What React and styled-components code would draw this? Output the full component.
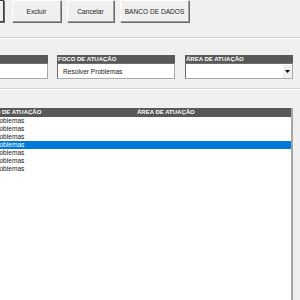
import React from "react";
import styled, { createGlobalStyle } from "styled-components";

const GlobalStyle = createGlobalStyle`
  html, body {
    margin: 0;
    padding: 0;
    background: #f0f0f0;
    font-family: "Liberation Sans", Arial, sans-serif;
  }
  #root {
    width: 300px;
    height: 300px;
    overflow: hidden;
  }
`;

const Window = styled.div`
  width: 300px;
  height: 300px;
  display: flex;
  flex-direction: column;
  overflow: hidden;
  background: #f0f0f0;
`;

const Toolbar = styled.div`
  display: flex;
  align-items: flex-start;
  gap: 6px;
  height: 37px;
  border-bottom: 1px solid #c9c9c9;
  box-shadow: 0 1px 0 #ffffff;
`;

const Button = styled.div`
  box-sizing: border-box;
  width: ${(p) => p.$w}px;
  height: 22px;
  margin-left: ${(p) => p.$ml || 0}px;
  display: flex;
  align-items: center;
  justify-content: center;
  background: #f0f0f0;
  border: 1px solid ${(p) => (p.$focus ? "#3c3c3c" : "#ffffff")};
  border-right-color: ${(p) => (p.$focus ? "#3c3c3c" : "#a0a0a0")};
  border-bottom-color: ${(p) => (p.$focus ? "#3c3c3c" : "#a0a0a0")};
  box-shadow: 1px 1px 0 #696969;
  font-size: 6.6px;
  color: #1a1a1a;
  white-space: nowrap;
`;

const FieldsRow = styled.div`
  display: flex;
  align-items: flex-start;
  padding-top: 17px;
  height: 33px;
  border-bottom: 1px solid #d6d6d6;
  box-shadow: 0 1px 0 #ffffff;
`;

const Field = styled.div`
  display: flex;
  flex-direction: column;
  width: ${(p) => p.$w}px;
  margin-left: ${(p) => p.$ml}px;
  flex-shrink: 0;
`;

const FieldLabel = styled.div`
  height: 8px;
  background: #585858;
  color: #ffffff;
  font-weight: bold;
  font-size: 6px;
  line-height: 8px;
  padding-left: 1px;
  white-space: nowrap;
  overflow: hidden;
`;

const FieldBox = styled.div`
  box-sizing: border-box;
  height: 16px;
  background: #ffffff;
  border: 1px solid #a9a9a9;
  border-top-color: #6d6d6d;
  border-left-color: #6d6d6d;
  display: flex;
  align-items: center;
  justify-content: space-between;
  padding-left: 5px;
  font-size: 6.6px;
  color: #1a1a1a;
`;

const DropButton = styled.div`
  width: 9px;
  height: 13px;
  background: #f0f0f0;
  display: flex;
  align-items: center;
  justify-content: center;
`;

const GridArea = styled.div`
  flex: 1;
  margin-top: 19px;
  width: 293px;
  display: flex;
  flex-direction: column;
  background: #ffffff;
  border-right: 2px solid #a6a6a6;
  box-sizing: border-box;
  overflow: hidden;
`;

const GridRow = styled.div`
  display: flex;
  height: ${(p) => (p.$head ? 9 : 8)}px;
  line-height: ${(p) => (p.$head ? 9 : 8)}px;
  background: ${(p) => (p.$head ? "#585858" : p.$sel ? "#0078d7" : "#ffffff")};
  color: ${(p) => (p.$head || p.$sel ? "#ffffff" : "#1a1a1a")};
  font-weight: ${(p) => (p.$head ? "bold" : "normal")};
  font-size: ${(p) => (p.$head ? 6 : 6.6)}px;
  white-space: nowrap;
`;

const Cell = styled.div`
  width: ${(p) => p.$w}px;
  flex-shrink: 0;
  overflow: hidden;
  text-indent: ${(p) => p.$indent || 0}px;
`;

const rows = [false, false, false, true, false, false, false];

export default function App() {
  return (
    <Window>
      <GlobalStyle />
      <Toolbar>
        <Button $w={48} $ml={-44} $focus />
        <Button $w={49} style={{ marginLeft: 2 }}>Excluir</Button>
        <Button $w={47}>Cancelar</Button>
        <Button $w={69}>BANCO DE DADOS</Button>
      </Toolbar>
      <FieldsRow>
        <Field $w={100} $ml={-52}>
          <FieldLabel>&nbsp;</FieldLabel>
          <FieldBox />
        </Field>
        <Field $w={118} $ml={9}>
          <FieldLabel>FOCO DE ATUAÇÃO</FieldLabel>
          <FieldBox>Resolver Problemas</FieldBox>
        </Field>
        <Field $w={108} $ml={10}>
          <FieldLabel>ÁREA DE ATUAÇÃO</FieldLabel>
          <FieldBox>
            <span />
            <DropButton>
              <svg width="5" height="3" viewBox="0 0 5 3">
                <path d="M0 0H5L2.5 3Z" fill="#000" />
              </svg>
            </DropButton>
          </FieldBox>
        </Field>
      </FieldsRow>
      <GridArea>
        <GridRow $head>
          <Cell $w={137} $indent={-17}>FOCO DE ATUAÇÃO</Cell>
          <Cell $w={156}>ÁREA DE ATUAÇÃO</Cell>
        </GridRow>
        {rows.map((sel, i) => (
          <GridRow key={i} $sel={sel}>
            <Cell $w={137} $indent={-35}>Resolver Problemas</Cell>
            <Cell $w={156} />
          </GridRow>
        ))}
      </GridArea>
    </Window>
  );
}
